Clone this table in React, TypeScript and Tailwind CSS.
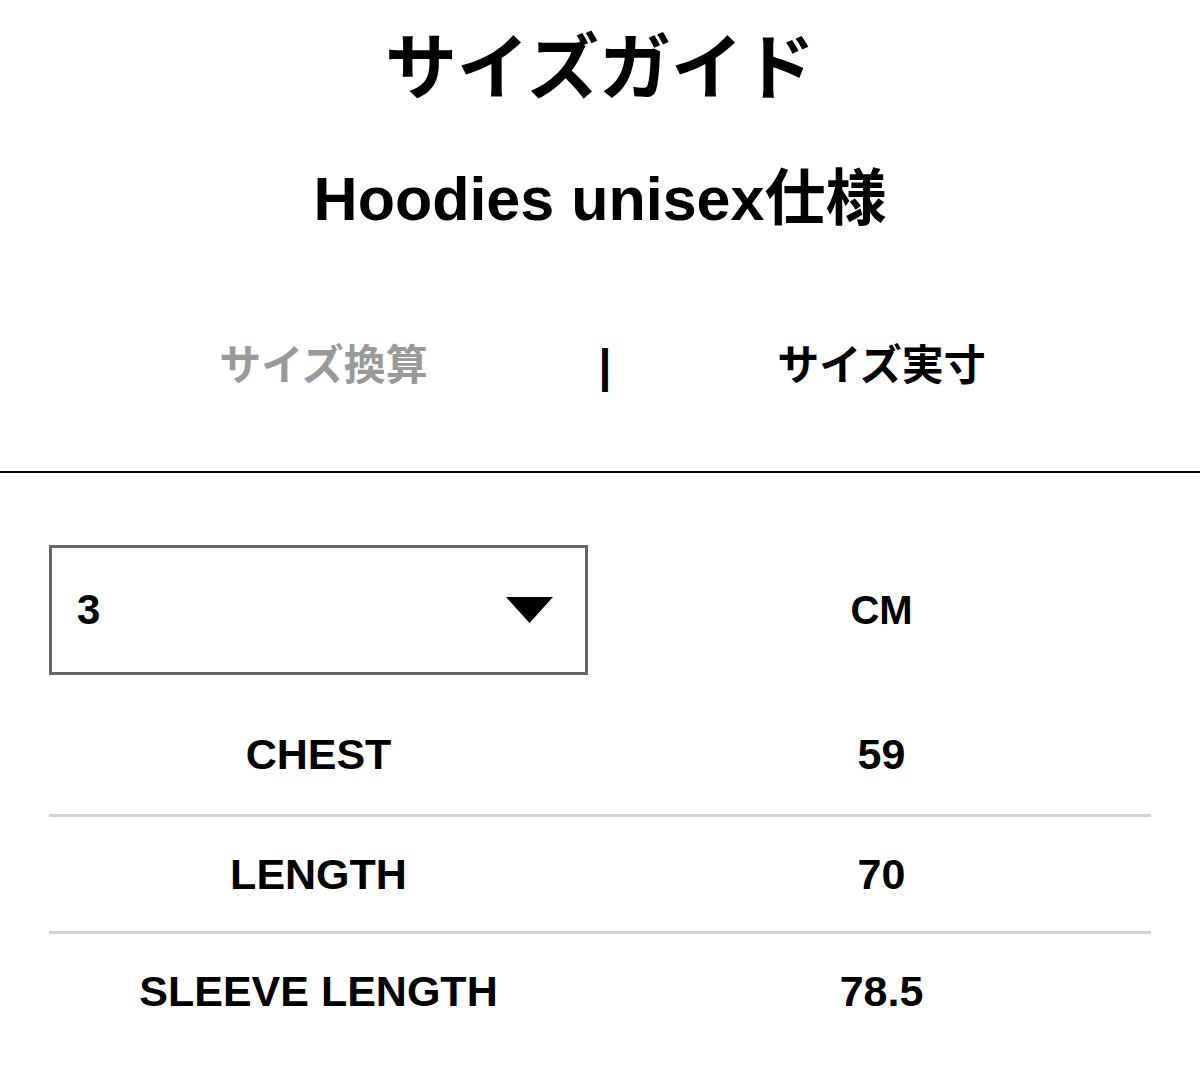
const font = "font-['Liberation_Sans','Noto_Sans_CJK_JP',sans-serif]";

const rows = [
	{ label: "CHEST", value: "59" },
	{ label: "LENGTH", value: "70" },
	{ label: "SLEEVE LENGTH", value: "78.5" },
];

export default function App() {
	return (
		<div className={`${font} min-h-[1085px] bg-white font-bold text-black`}>
			<div className="flex h-[136px] items-center justify-center text-[72px] leading-none">
				サイズガイド
			</div>
			<div className="flex h-[126px] items-center justify-center text-[61px] leading-none">
				Hoodies unisex仕様
			</div>

			<div className="grid h-[208px] grid-cols-[1fr_24px_1fr] items-center px-[49px] text-[42px] leading-none">
				<button className="pl-[10px] text-center font-bold text-[#999]">サイズ換算</button>
				<span className="pl-[10px] text-center text-[46px]">|</span>
				<button className="text-center font-bold">サイズ実寸</button>
			</div>
			<div className="mt-px h-[2px] w-full bg-black" />

			<div className="px-[49px] pt-[72px]">
				<div className="grid grid-cols-2 gap-x-6">
					<div className="flex h-[130px] items-center justify-between border-[3px] border-[#666] pl-[25px] pr-[32px]">
						<span className="text-[42px] leading-none">3</span>
						<svg width="47" height="26" viewBox="0 0 47 26">
							<path d="M0 0 H47 L23.5 26 Z" fill="#000" />
						</svg>
					</div>
					<div className="flex items-center justify-center text-[40px] leading-none">CM</div>
				</div>

				<div className="mt-[22px]">
					{rows.map((row, i) => (
						<div
							key={row.label}
							className={`grid h-[117px] grid-cols-2 gap-x-6 text-[43px] leading-none ${i > 0 ? "border-t-[3px] border-[#d4d4d4]" : "pb-[3px]"}`}
						>
							<div className="flex items-center justify-center">{row.label}</div>
							<div className="flex items-center justify-center">{row.value}</div>
						</div>
					))}
				</div>
			</div>
		</div>
	);
}
